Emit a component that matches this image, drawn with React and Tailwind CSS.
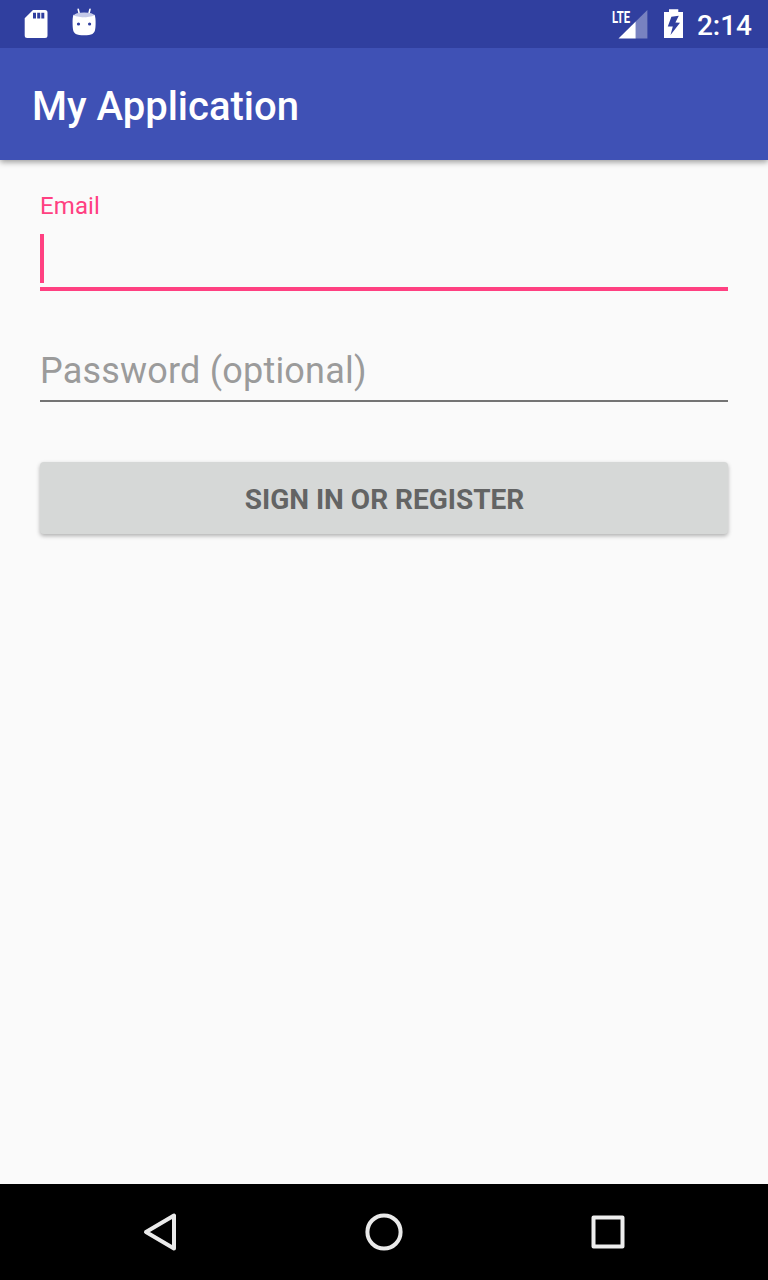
function SdCard() {
  return (
    <svg className="h-12 w-6" viewBox="24 0 24 48" aria-hidden="true">
      <path
        fill="#fff"
        fillRule="evenodd"
        d="M33 10H45Q47.5 10 47.5 12.5V35.5Q47.5 38 45 38H27.2Q24.7 38 24.7 35.5V18.3ZM33 12.8V18.5H36V12.8ZM37.2 12.8V18.5H40.2V12.8ZM41.3 12.8V18.5H44.3V12.8Z"
      />
    </svg>
  );
}

function DroidHead() {
  return (
    <svg className="h-12 w-6" viewBox="72 0 24 48" aria-hidden="true">
      <path d="M78.2 9.2L79.3 13.8M90 9.2L88.9 13.8" stroke="#fff" strokeWidth="1.6" strokeLinecap="round" />
      <ellipse cx="84.1" cy="15.2" rx="10.1" ry="2.8" fill="#c5cae9" />
      <path
        fill="#fff"
        fillRule="evenodd"
        d="M73.5 14.6C76 18.2 92.2 18.2 94.6 14.6C95.4 17 95.7 20 95.6 24C95.5 30 94.9 32.4 92.4 33.9C89.5 35.6 78.7 35.6 75.8 33.9C73.3 32.4 72.7 30 72.6 24C72.5 20 72.7 17 73.5 14.6ZM76.9 24a1.6 1.6 0 1 0 3.2 0a1.6 1.6 0 1 0 -3.2 0ZM88 24a1.6 1.6 0 1 0 3.2 0a1.6 1.6 0 1 0 -3.2 0Z"
      />
    </svg>
  );
}

function Signal() {
  return (
    <svg className="h-12 w-9" viewBox="612 0 36 48" aria-hidden="true">
      <path d="M635.7 21.6L647.4 9.9V38.4H635.7Z" fill="#fff" fillOpacity=".35" />
      <path d="M618.5 38.4L635.7 21.4V38.4Z" fill="#fff" />
      <text
        x="612"
        y="22.7"
        textLength="18.2"
        lengthAdjust="spacingAndGlyphs"
        fill="#fff"
        className="font-['Roboto',sans-serif] text-[17px] font-bold"
      >
        LTE
      </text>
    </svg>
  );
}

function Battery() {
  return (
    <svg className="h-12 w-5" viewBox="664 0 20 48" aria-hidden="true">
      <path
        fill="#fff"
        fillRule="evenodd"
        d="M669 9.3H678.3V12H683V38H664V12H669ZM671.4 16.8L678.8 15.8L675.4 22.6L680 22.8L670.5 35L672.8 26.4L667.8 26.6Z"
      />
    </svg>
  );
}

function StatusBar() {
  return (
    <div className="z-10 flex h-12 shrink-0 items-center justify-between bg-[#303f9f] pl-6 pr-4">
      <div className="flex gap-6">
        <SdCard />
        <DroidHead />
      </div>
      <div className="flex items-center">
        <Signal />
        <div className="ml-4 flex">
          <Battery />
        </div>
        <span className="ml-3 w-14 pt-1 text-right text-[28px] font-medium leading-8 whitespace-nowrap text-white">2:14</span>
      </div>
    </div>
  );
}

function NavBar() {
  return (
    <nav className="flex h-24 shrink-0 items-center justify-between bg-black px-34">
      <button aria-label="Back">
        <svg className="size-12" viewBox="0 0 48 48" fill="none" stroke="#eaeaea" strokeWidth="4" strokeLinejoin="round">
          <path d="M38 7.5V40.5L10 24Z" />
        </svg>
      </button>
      <button aria-label="Home">
        <svg className="size-12" viewBox="0 0 48 48" fill="none" stroke="#eaeaea" strokeWidth="4">
          <circle cx="24" cy="24" r="16.6" />
        </svg>
      </button>
      <button aria-label="Recent apps">
        <svg className="size-12" viewBox="0 0 48 48" fill="none" stroke="#eeeeee" strokeWidth="4" strokeLinejoin="round">
          <rect x="9.5" y="9.5" width="29" height="29" />
        </svg>
      </button>
    </nav>
  );
}

export default function App() {
  return (
    <div className="flex h-[1280px] w-[768px] flex-col overflow-hidden bg-[#fafafa] font-['Roboto',sans-serif]">
      <StatusBar />
      <header className="flex h-28 shrink-0 items-center bg-[#3f51b5] px-8 pt-1.5 shadow-[0_2px_6px_rgba(0,0,0,0.4)]">
        <h1 className="text-[40px] font-medium leading-12 text-white">My Application</h1>
      </header>
      <main className="flex flex-1 flex-col px-10 pt-8">
        <div className="flex flex-col border-b-4 border-[#ff4081] pb-1">
          <label className="text-2xl leading-7 tracking-[0.1px] text-[#ff4081]">Email</label>
          <div className="mt-3.5 h-[49px] w-1 bg-[#ff4081]" />
        </div>
        <div className="mt-[57px] h-[54px] border-b-2 border-[#747474] text-4xl leading-[46px] tracking-[0.2px] text-[#9b9b9b]">
          Password (optional)
        </div>
        <button className="mt-15 h-[72px] rounded-[4px] bg-[#d6d8d7] pl-px pt-1 text-[28px] font-bold leading-8 text-[#636464] shadow-[0_2px_4px_rgba(0,0,0,0.3)]">
          SIGN IN OR REGISTER
        </button>
      </main>
      <NavBar />
    </div>
  );
}
